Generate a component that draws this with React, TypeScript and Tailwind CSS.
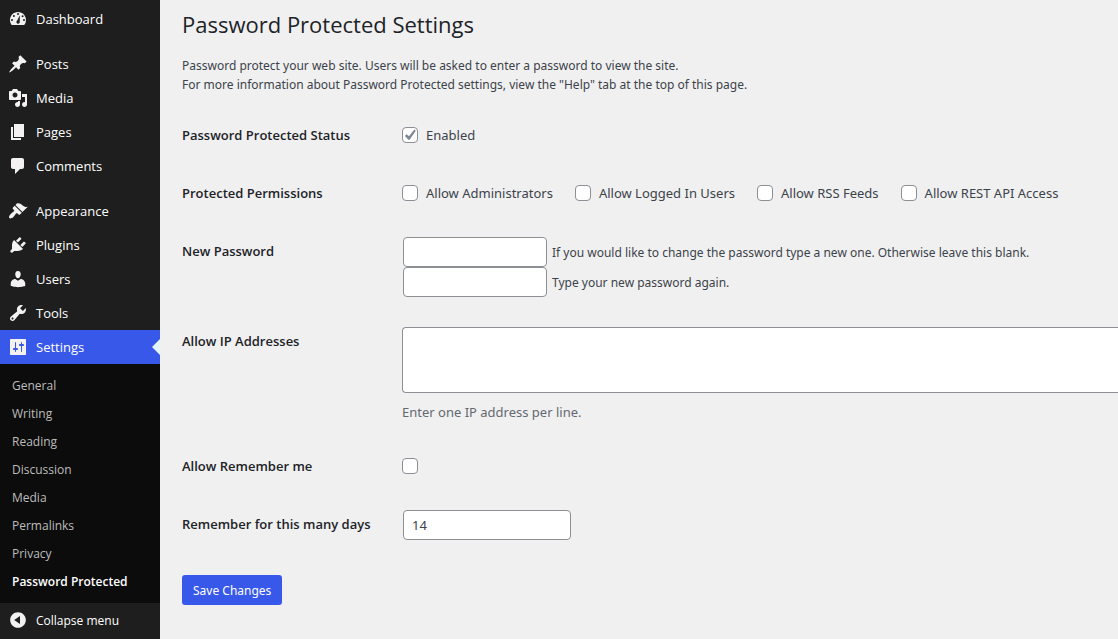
import type { InputHTMLAttributes, ReactNode } from "react";
import { clsx } from "clsx";

const ICONS = {
  dashboard:
    "M3.76 16h12.48A7.96 7.96 0 0 0 18 11c0-4.42-3.58-8-8-8s-8 3.58-8 8c0 1.89.66 3.63 1.76 5zM9 5a1 1 0 1 1 2 0a1 1 0 1 1-2 0zM4.9 7a1 1 0 1 1 2 0a1 1 0 1 1-2 0zM13.6 7.2a1 1 0 1 1 2 0a1 1 0 1 1-2 0zM3 11a1 1 0 1 1 2 0a1 1 0 1 1-2 0zM15 11a1 1 0 1 1 2 0a1 1 0 1 1-2 0zM11.9 6.3l-.2 6.2A1.7 1.7 0 1 1 9.2 11.6z",
  posts:
    "M10.44 3.02l1.82-1.82 6.36 6.35-1.83 1.82c-1.05-.68-2.48-.57-3.41.36l-.75.75c-.92.93-1.04 2.35-.35 3.41l-1.83 1.82-2.41-2.41-2.8 2.79c-.42.42-3.38 2.71-3.8 2.29s1.86-3.39 2.28-3.81l2.79-2.79L4.1 9.36l1.83-1.82c1.05.69 2.48.57 3.4-.36l.75-.75c.93-.92 1.05-2.35.36-3.41z",
  media:
    "M13 11V4c0-.55-.45-1-1-1h-1.67L9 1H5L3.67 3H2c-.55 0-1 .45-1 1v7c0 .55.45 1 1 1h10c.55 0 1-.45 1-1zM7 4.5c1.38 0 2.5 1.12 2.5 2.5S8.38 9.5 7 9.5 4.5 8.38 4.5 7 5.62 4.5 7 4.5zM14 6h5v10.5c0 1.38-1.12 2.5-2.5 2.5S14 17.88 14 16.5s1.12-2.5 2.5-2.5c.17 0 .34.02.5.05V9h-3V6zm-4 8.05V13h2v3.5c0 1.38-1.12 2.5-2.5 2.5S7 17.88 7 16.5 8.12 14 9.5 14c.17 0 .34.02.5.05z",
  pages: "M6 15V2h10v13H6zm-1 1h8v2H3V5h2v11z",
  comments: "M5 2h9c1.1 0 2 .9 2 2v7c0 1.1-.9 2-2 2h-2l-5 5v-5H5c-1.1 0-2-.9-2-2V4c0-1.1.9-2 2-2z",
  appearance:
    "M14.48 11.06L7.41 3.99l1.5-1.5c.5-.56 2.3-.47 3.51.32 1.21.8 1.43 1.28 2.91 2.1 1.18.64 2.45 1.26 4.45.85zm-.71.71L6.7 4.7 4.93 6.47c-.39.39-.39 1.02 0 1.41l1.06 1.06c.39.39.39 1.03 0 1.42-.6.6-1.43 1.11-2.21 1.69-.35.26-.7.53-1.01.84C1.43 14.23.4 16.08 1.4 17.07c.99 1 2.84-.03 4.18-1.36.31-.31.58-.66.85-1.02.57-.78 1.08-1.61 1.69-2.21.39-.39 1.02-.39 1.41 0l1.06 1.06c.39.39 1.02.39 1.41 0z",
  plugins:
    "M13.11 4.36L9.87 7.6 8 5.73l3.24-3.24c.35-.34 1.05-.2 1.56.32.52.51.66 1.21.31 1.55zm-8 1.77l.91-1.12 9.01 9.01-1.19.84c-.71.71-2.63 1.16-3.82 1.16H6.14L4.9 17.26c-.59.59-1.54.59-2.12 0-.59-.58-.59-1.53 0-2.12l1.24-1.24v-3.88c0-1.13.4-3.19 1.09-3.89zm7.26 3.97l3.24-3.24c.34-.35 1.04-.21 1.55.31.52.51.66 1.21.31 1.55l-3.24 3.25z",
  users:
    "M10 9.25c-2.27 0-2.73-3.44-2.73-3.44C7 4.02 7.82 2 9.97 2c2.16 0 2.98 2.02 2.71 3.81 0 0-.41 3.44-2.68 3.44zm0 2.57L12.72 10c2.39 0 4.52 2.33 4.52 4.53v2.49s-3.65 1.13-7.24 1.13c-3.65 0-7.24-1.13-7.24-1.13v-2.49c0-2.25 1.94-4.48 4.47-4.48z",
  tools:
    "M16.68 9.77c-1.34 1.34-3.3 1.67-4.95.99l-5.41 6.52c-.99.99-2.59.99-3.58 0s-.99-2.59 0-3.57l6.52-5.42c-.68-1.65-.35-3.61.99-4.95 1.28-1.28 3.12-1.62 4.72-1.06l-2.89 2.89 2.82 2.82 2.86-2.87c.53 1.58.18 3.39-1.08 4.65zM3.81 16.21c.4.39 1.04.39 1.43 0 .4-.4.4-1.04 0-1.43-.39-.4-1.03-.4-1.43 0-.39.39-.39 1.03 0 1.43z",
  settings:
    "M18 17V3c0-.55-.45-1-1-1H3c-.55 0-1 .45-1 1v14c0 .55.45 1 1 1h14c.55 0 1-.45 1-1zM8 11h1c.55 0 1 .45 1 1s-.45 1-1 1H8v1.5c0 .28-.22.5-.5.5s-.5-.22-.5-.5V13H6c-.55 0-1-.45-1-1s.45-1 1-1h1V5.5c0-.28.22-.5.5-.5s.5.22.5.5V11zm5-2h-1c-.55 0-1-.45-1-1s.45-1 1-1h1V5.5c0-.28.22-.5.5-.5s.5.22.5.5V7h1c.55 0 1 .45 1 1s-.45 1-1 1h-1v5.5c0 .28-.22.5-.5.5s-.5-.22-.5-.5V9z",
  collapse:
    "M10 2.16c4.33 0 7.84 3.51 7.84 7.84s-3.51 7.84-7.84 7.84S2.16 14.33 2.16 10 5.67 2.16 10 2.16zm2 11.72V6.12L6.18 9.97z",
};

type IconName = keyof typeof ICONS;

// Menu groups are separated by a small gap
const MENU: { icon: IconName; label: string }[][] = [
  [{ icon: "dashboard", label: "Dashboard" }],
  [
    { icon: "posts", label: "Posts" },
    { icon: "media", label: "Media" },
    { icon: "pages", label: "Pages" },
    { icon: "comments", label: "Comments" },
  ],
  [
    { icon: "appearance", label: "Appearance" },
    { icon: "plugins", label: "Plugins" },
    { icon: "users", label: "Users" },
    { icon: "tools", label: "Tools" },
    { icon: "settings", label: "Settings" },
  ],
];

const SUBMENU = [
  "General",
  "Writing",
  "Reading",
  "Discussion",
  "Media",
  "Permalinks",
  "Privacy",
  "Password Protected",
];

const PERMISSIONS = [
  "Allow Administrators",
  "Allow Logged In Users",
  "Allow RSS Feeds",
  "Allow REST API Access",
];

function Icon({ name }: { name: IconName }) {
  return (
    <svg viewBox="0 0 20 20" className="size-5 shrink-0 fill-[#f3f1f1]" fillRule="evenodd" aria-hidden="true">
      <path d={ICONS[name]} />
    </svg>
  );
}

function Sidebar() {
  return (
    <nav className="w-40 shrink-0 bg-[#1e1e1e] pt-[2px] text-[13px] text-white">
      <div className="flex flex-col gap-[11px]">
        {MENU.map((group) => (
          <ul key={group[0].label}>
            {group.map(({ icon, label }) => {
              const active = label === "Settings";
              return (
                <li key={label}>
                  <a
                    href="#"
                    className={clsx(
                      "relative flex h-[34px] items-center gap-2 pl-2",
                      active && "bg-[#3858e9]"
                    )}
                  >
                    <Icon name={icon} />
                    <span className="pt-[2px]">{label}</span>
                    {active && (
                      <span className="absolute right-0 border-8 border-l-0 border-transparent border-r-[#e3f6f8]" />
                    )}
                  </a>
                </li>
              );
            })}
          </ul>
        ))}
      </div>

      <ul className="bg-[#0c0c0c] pt-2 pb-[7px] text-xs text-[#bcbcbc]">
        {SUBMENU.map((label) => (
          <li key={label}>
            <a
              href="#"
              className={clsx(
                "flex h-7 items-center px-3",
                label === "Password Protected" && "font-semibold text-white"
              )}
            >
              {label}
            </a>
          </li>
        ))}
      </ul>

      <button type="button" className="flex h-[34px] w-full items-center gap-2 pl-2 text-xs">
        <Icon name="collapse" />
        <span className="pt-[2px]">Collapse menu</span>
      </button>
    </nav>
  );
}

function Checkbox(props: InputHTMLAttributes<HTMLInputElement>) {
  return (
    <span className="relative flex size-4 shrink-0">
      <input
        type="checkbox"
        className="peer size-4 appearance-none rounded-[4px] border border-[#8c8f94] bg-white"
        {...props}
      />
      <svg
        viewBox="0 0 16 16"
        className="pointer-events-none absolute inset-0 hidden fill-[#7e8993] peer-checked:block"
        aria-hidden="true"
      >
        <path d="M12.3 2.6l1.5 1.1-6.2 9h-1.2L2.9 9l1.7-1.7 2.3 2z" />
      </svg>
    </span>
  );
}

function Row({ label, htmlFor, children }: { label: string; htmlFor?: string; children: ReactNode }) {
  const Tag = htmlFor ? "label" : "span";
  return (
    <div className="flex">
      <Tag
        htmlFor={htmlFor}
        className="w-[220px] shrink-0 pt-5 font-['Open_Sans',sans-serif] text-[13px] leading-[18px] font-semibold text-[#1d2327]"
      >
        {label}
      </Tag>
      <div className="min-w-0 flex-1 py-[15px]">{children}</div>
    </div>
  );
}

const INPUT = "ml-px block h-[30px] rounded-[4px] border border-[#8c8f94] bg-white px-2";

export default function App() {
  return (
    <div className="flex min-h-screen bg-[#f0f0f1] font-['Open_Sans','Noto_Sans',sans-serif] text-[#3c434a]">
      <Sidebar />

      <main className="min-w-0 flex-1 pt-2 pl-[22px] font-['Noto_Sans','Open_Sans',sans-serif]">
        <h1 className="font-['Open_Sans',sans-serif] text-[22px] leading-8 text-[#1d2327]">
          Password Protected Settings
        </h1>
        <p className="mt-4 text-xs leading-[19px]">
          Password protect your web site. Users will be asked to enter a password to view the site.
          <br />
          For more information about Password Protected settings, view the "Help" tab at the top of this page.
        </p>

        <form className="mt-3 text-[13px]">
          <Row label="Password Protected Status" htmlFor="status">
            <label className="flex h-7 items-center gap-2">
              <Checkbox id="status" defaultChecked />
              <span className="pt-[2px]">Enabled</span>
            </label>
          </Row>

          <Row label="Protected Permissions">
            <div className="flex h-7 items-center gap-[22px]">
              {PERMISSIONS.map((name) => (
                <label key={name} className="flex items-center gap-2">
                  <Checkbox />
                  <span className="pt-[2px]">{name}</span>
                </label>
              ))}
            </div>
          </Row>

          <Row label="New Password" htmlFor="password">
            <div className="flex items-center gap-[5px] text-xs">
              <input id="password" type="password" className={clsx(INPUT, "w-36")} />
              <span className="pt-[2px]">
                If you would like to change the password type a new one. Otherwise leave this blank.
              </span>
            </div>
            <label className="flex flex-row-reverse items-center justify-end gap-[5px] text-xs">
              <span className="pt-[2px]">Type your new password again.</span>
              <input type="password" className={clsx(INPUT, "w-36")} />
            </label>
          </Row>

          <Row label="Allow IP Addresses" htmlFor="ips">
            {/* Runs to the right edge of the page */}
            <textarea
              id="ips"
              className="block h-[66px] w-full resize-none rounded-l-[4px] border border-r-0 border-[#8c8f94] bg-white px-2 py-[2px]"
            />
            <p className="mt-[9px] leading-5 text-[#646970]">Enter one IP address per line.</p>
          </Row>

          <Row label="Allow Remember me" htmlFor="remember">
            <div className="flex h-7 items-center">
              <Checkbox id="remember" />
            </div>
          </Row>

          <Row label="Remember for this many days" htmlFor="days">
            <input id="days" type="text" defaultValue="14" className={clsx(INPUT, "w-[168px]")} />
          </Row>

          <button
            type="submit"
            className="mt-5 h-[30px] rounded-[3px] bg-[#3858e9] px-[11px] pt-[2px] text-xs text-white"
          >
            Save Changes
          </button>
        </form>
      </main>
    </div>
  );
}
